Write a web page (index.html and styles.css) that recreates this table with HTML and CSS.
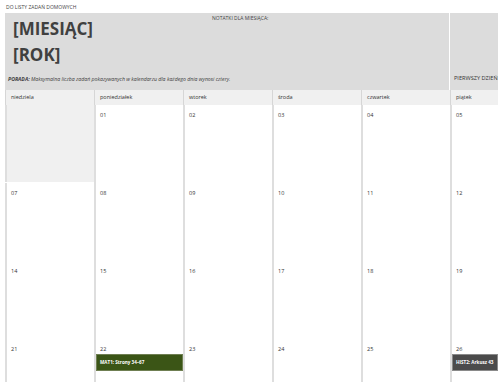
FILE: index.html
```html
<!DOCTYPE html>
<html lang="pl">
<head>
<meta charset="utf-8">
<title>Kalendarz</title>
<link rel="stylesheet" href="styles.css">
</head>
<body>
<div class="page">
  <div class="toplink">DO LISTY ZADAŃ DOMOWYCH</div>
  <div class="sheet">
    <div class="banner">
      <div class="banner-main">
        <div class="title-col">
          <div class="title">[MIESIĄC]<br>[ROK]</div>
          <div class="tip"><b>PORADA:</b> Maksymalna liczba zadań pokazywanych w kalendarzu dla każdego dnia wynosi cztery.</div>
        </div>
        <div class="notes">NOTATKI DLA MIESIĄCA:</div>
      </div>
      <div class="banner-side">
        <div class="firstday">PIERWSZY DZIEŃ</div>
      </div>
    </div>
    <div class="days">
      <div class="dayname">niedziela</div>
      <div class="dayname">poniedziałek</div>
      <div class="dayname">wtorek</div>
      <div class="dayname">środa</div>
      <div class="dayname">czwartek</div>
      <div class="dayname">piątek</div>
    </div>
    <div class="grid">
      <div class="cell empty"></div>
      <div class="cell"><span class="num">01</span></div>
      <div class="cell"><span class="num">02</span></div>
      <div class="cell"><span class="num">03</span></div>
      <div class="cell"><span class="num">04</span></div>
      <div class="cell"><span class="num">05</span></div>

      <div class="cell"><span class="num">07</span></div>
      <div class="cell"><span class="num">08</span></div>
      <div class="cell"><span class="num">09</span></div>
      <div class="cell"><span class="num">10</span></div>
      <div class="cell"><span class="num">11</span></div>
      <div class="cell"><span class="num">12</span></div>

      <div class="cell"><span class="num">14</span></div>
      <div class="cell"><span class="num">15</span></div>
      <div class="cell"><span class="num">16</span></div>
      <div class="cell"><span class="num">17</span></div>
      <div class="cell"><span class="num">18</span></div>
      <div class="cell"><span class="num">19</span></div>

      <div class="cell"><span class="num">21</span></div>
      <div class="cell"><span class="num">22</span><div class="event green">MAT1: Strony 34–67</div></div>
      <div class="cell"><span class="num">23</span></div>
      <div class="cell"><span class="num">24</span></div>
      <div class="cell"><span class="num">25</span></div>
      <div class="cell"><span class="num">26</span><div class="event gray">HIST2: Arkusz 43</div></div>
    </div>
  </div>
</div>
</body>
</html>
```
FILE: styles.css
```css
html, body {
  margin: 0;
  padding: 0;
  background: #ffffff;
  overflow: hidden;
}
body {
  font-family: "Open Sans", "DejaVu Sans", sans-serif;
  color: #333333;
}
.page {
  width: 498px;
  height: 382px;
  overflow: hidden;
}
.toplink {
  font-size: 5px;
  line-height: 7px;
  padding: 4px 0 2px 6px;
  color: #444444;
}
.sheet {
  margin-left: 5px;
  width: 493px;
}
.banner {
  display: flex;
  height: 77px;
  gap: 1px;
}
.banner-main {
  width: 444px;
  background: #dcdcdc;
  display: flex;
}
.banner-side {
  flex: 1;
  min-width: 0;
  background: #dcdcdc;
  display: flex;
  align-items: flex-end;
  overflow: hidden;
}
.title-col {
  width: 207px;
  display: flex;
  flex-direction: column;
}
.title {
  font-size: 17px;
  font-weight: 700;
  line-height: 26px;
  color: #404040;
  padding: 3px 0 0 8px;
}
.tip {
  font-size: 5.2px;
  line-height: 7px;
  font-style: italic;
  color: #404040;
  padding: 8px 0 0 3px;
  white-space: nowrap;
}
.tip b {
  font-weight: 700;
}
.notes {
  font-size: 5px;
  line-height: 7px;
  padding-top: 2px;
  color: #444444;
}
.firstday {
  font-size: 5.6px;
  line-height: 7px;
  color: #333333;
  padding: 0 0 8px 4px;
  white-space: nowrap;
}
.days {
  display: grid;
  grid-template-columns: repeat(5, 89px) 1fr;
  height: 15px;
  background: #f0f0f0;
}
.dayname {
  font-size: 5.5px;
  line-height: 15px;
  padding-left: 5px;
  border-left: 1px solid #d6d6d6;
  color: #333333;
}
.grid {
  display: grid;
  grid-template-columns: repeat(5, 89px) 1fr;
  grid-auto-rows: 78px;
}
.cell {
  border-left: 2px solid #dedede;
  padding: 7px 0 0 4px;
  min-width: 0;
}
.cell.empty {
  background: #f0f0f0;
  margin-bottom: 1px;
}
.num {
  display: block;
  font-size: 5.5px;
  line-height: 7px;
  color: #333333;
  height: 7px;
}
.event {
  margin: 1px 0 0 -4px;
  height: 15px;
  font-size: 4.6px;
  font-weight: 700;
  line-height: 15px;
  color: #ffffff;
  padding-left: 3px;
  white-space: nowrap;
}
.event.green {
  background: #3b5516;
  border: 1px solid #6f7f52;
}
.event.gray {
  background: #4b4b4b;
  border: 1px solid #8a8a8a;
}
```
